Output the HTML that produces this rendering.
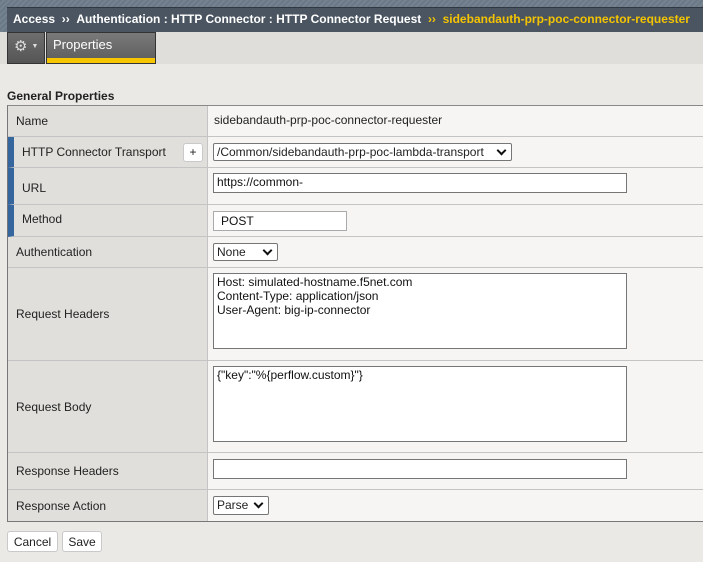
<!DOCTYPE html>
<html><head><style>
*{box-sizing:border-box;margin:0;padding:0}
body{width:703px;height:562px;background:#eae9e5;font-family:"Liberation Sans",Arial,sans-serif;font-size:12px;color:#222;position:relative;overflow:hidden}
.a{position:absolute}
.hdr{left:0;top:0;width:703px;height:32px;background:repeating-linear-gradient(135deg,#6b7987 0 2px,#75828f 2px 4px)}
.hbar{left:7px;top:7px;width:696px;height:25px;background:#4a5561;border-top:1px solid #2f3842;color:#fff;font-weight:bold;font-size:12px;line-height:23px;padding-left:6px;white-space:nowrap;overflow:hidden}
.tabs{left:0;top:32px;width:703px;height:32px;background:#dfdeda}
.lbl{background:#e0dfdb;border-bottom:1px solid #c4c4c4;border-right:1px solid #c4c4c4;padding-left:8px;display:flex;align-items:center;font-size:12px}
.val{background:#f6f5f3;border-bottom:1px solid #c4c4c4}
.req{border-left:6px solid #35679e;padding-left:8px}
.inp{position:absolute;background:#fff;border:1px solid #767676;font-size:12px;padding:1px 3px;line-height:14px;color:#111}
.btn{position:absolute;background:#fff;border:1px solid #c9c9c9;border-radius:3px;font-size:12px;text-align:center;line-height:20px}
.sel{position:absolute;background:#fff;border:1px solid #767676;border-radius:2px;font-size:12px;padding:0 3px;line-height:16px}
.sel:after{content:"";position:absolute;right:6px;top:3px;width:5px;height:5px;border-right:2px solid #111;border-bottom:2px solid #111;transform:rotate(45deg)}
</style></head><body>
<div class="a hdr"></div>
<div class="a hbar">Access &nbsp;›› &nbsp;Authentication : HTTP Connector : HTTP Connector Request &nbsp;<span style="color:#f5c400">›› &nbsp;sidebandauth-prp-poc-connector-requester</span></div>
<div class="a tabs"></div>
<div class="a" style="left:7px;top:32px;width:38px;height:32px;background:linear-gradient(#6e6e6e,#555);border:1px solid #333;color:#ddd;font-size:15px;line-height:28px;padding-left:6px">⚙<span style="font-size:7px;margin-left:4px;vertical-align:middle">▼</span></div>
<div class="a" style="left:46px;top:32px;width:110px;height:32px;background:linear-gradient(#7a7a7a,#5c5c5c);border:1px solid #333;color:#fff;font-size:13px;padding:4px 0 0 6px">Properties<div class="a" style="left:0;bottom:0;width:108px;height:5px;background:#f7c600"></div></div>
<div class="a" style="left:7px;top:89px;font-weight:bold;font-size:12px">General Properties</div>
<div class="a" style="left:7px;top:105px;width:696px;height:417px;border-top:1px solid #888;border-left:1px solid #777;border-bottom:1px solid #777;background:#f6f5f3"></div>
<div class="a lbl" style="left:8px;top:106px;width:200px;height:31px">Name</div>
<div class="a lbl req" style="left:8px;top:137px;width:200px;height:31px">HTTP Connector Transport</div>
<div class="a lbl req" style="left:8px;top:168px;width:200px;height:37px;padding-top:3px">URL</div>
<div class="a lbl req" style="left:8px;top:205px;width:200px;height:32px;padding-bottom:3px">Method</div>
<div class="a lbl" style="left:8px;top:237px;width:200px;height:31px">Authentication</div>
<div class="a lbl" style="left:8px;top:268px;width:200px;height:93px">Request Headers</div>
<div class="a lbl" style="left:8px;top:361px;width:200px;height:92px">Request Body</div>
<div class="a lbl" style="left:8px;top:453px;width:200px;height:37px">Response Headers</div>
<div class="a lbl" style="left:8px;top:490px;width:200px;height:31px;border-bottom:none">Response Action</div>
<div class="a val" style="left:208px;top:106px;width:495px;height:31px"></div>
<div class="a val" style="left:208px;top:137px;width:495px;height:31px"></div>
<div class="a val" style="left:208px;top:168px;width:495px;height:37px"></div>
<div class="a val" style="left:208px;top:205px;width:495px;height:32px"></div>
<div class="a val" style="left:208px;top:237px;width:495px;height:31px"></div>
<div class="a val" style="left:208px;top:268px;width:495px;height:93px"></div>
<div class="a val" style="left:208px;top:361px;width:495px;height:92px"></div>
<div class="a val" style="left:208px;top:453px;width:495px;height:37px"></div>
<div class="a" style="left:214px;top:113px">sidebandauth-prp-poc-connector-requester</div>
<div class="btn" style="left:183px;top:143px;width:20px;height:19px;line-height:17px">+</div>
<div class="sel" style="left:213px;top:143px;width:299px;height:18px">/Common/sidebandauth-prp-poc-lambda-transport</div>
<div class="inp" style="left:213px;top:173px;width:414px;height:20px">https://common-</div>
<div class="inp" style="left:213px;top:211px;width:134px;height:20px;border-color:#aaa;padding-left:7px;line-height:16px">POST</div>
<div class="sel" style="left:213px;top:243px;width:65px;height:18px">None</div>
<div class="inp" style="left:213px;top:273px;width:414px;height:76px">Host: simulated-hostname.f5net.com<br>Content-Type: application/json<br>User-Agent: big-ip-connector</div>
<div class="inp" style="left:213px;top:366px;width:414px;height:76px">{"key":"%{perflow.custom}"}</div>
<div class="inp" style="left:213px;top:459px;width:414px;height:20px"></div>
<div class="sel" style="left:213px;top:496px;width:56px;height:19px">Parse</div>
<div class="btn" style="left:7px;top:531px;width:51px;height:21px">Cancel</div>
<div class="btn" style="left:62px;top:531px;width:40px;height:21px">Save</div>
</body></html>
